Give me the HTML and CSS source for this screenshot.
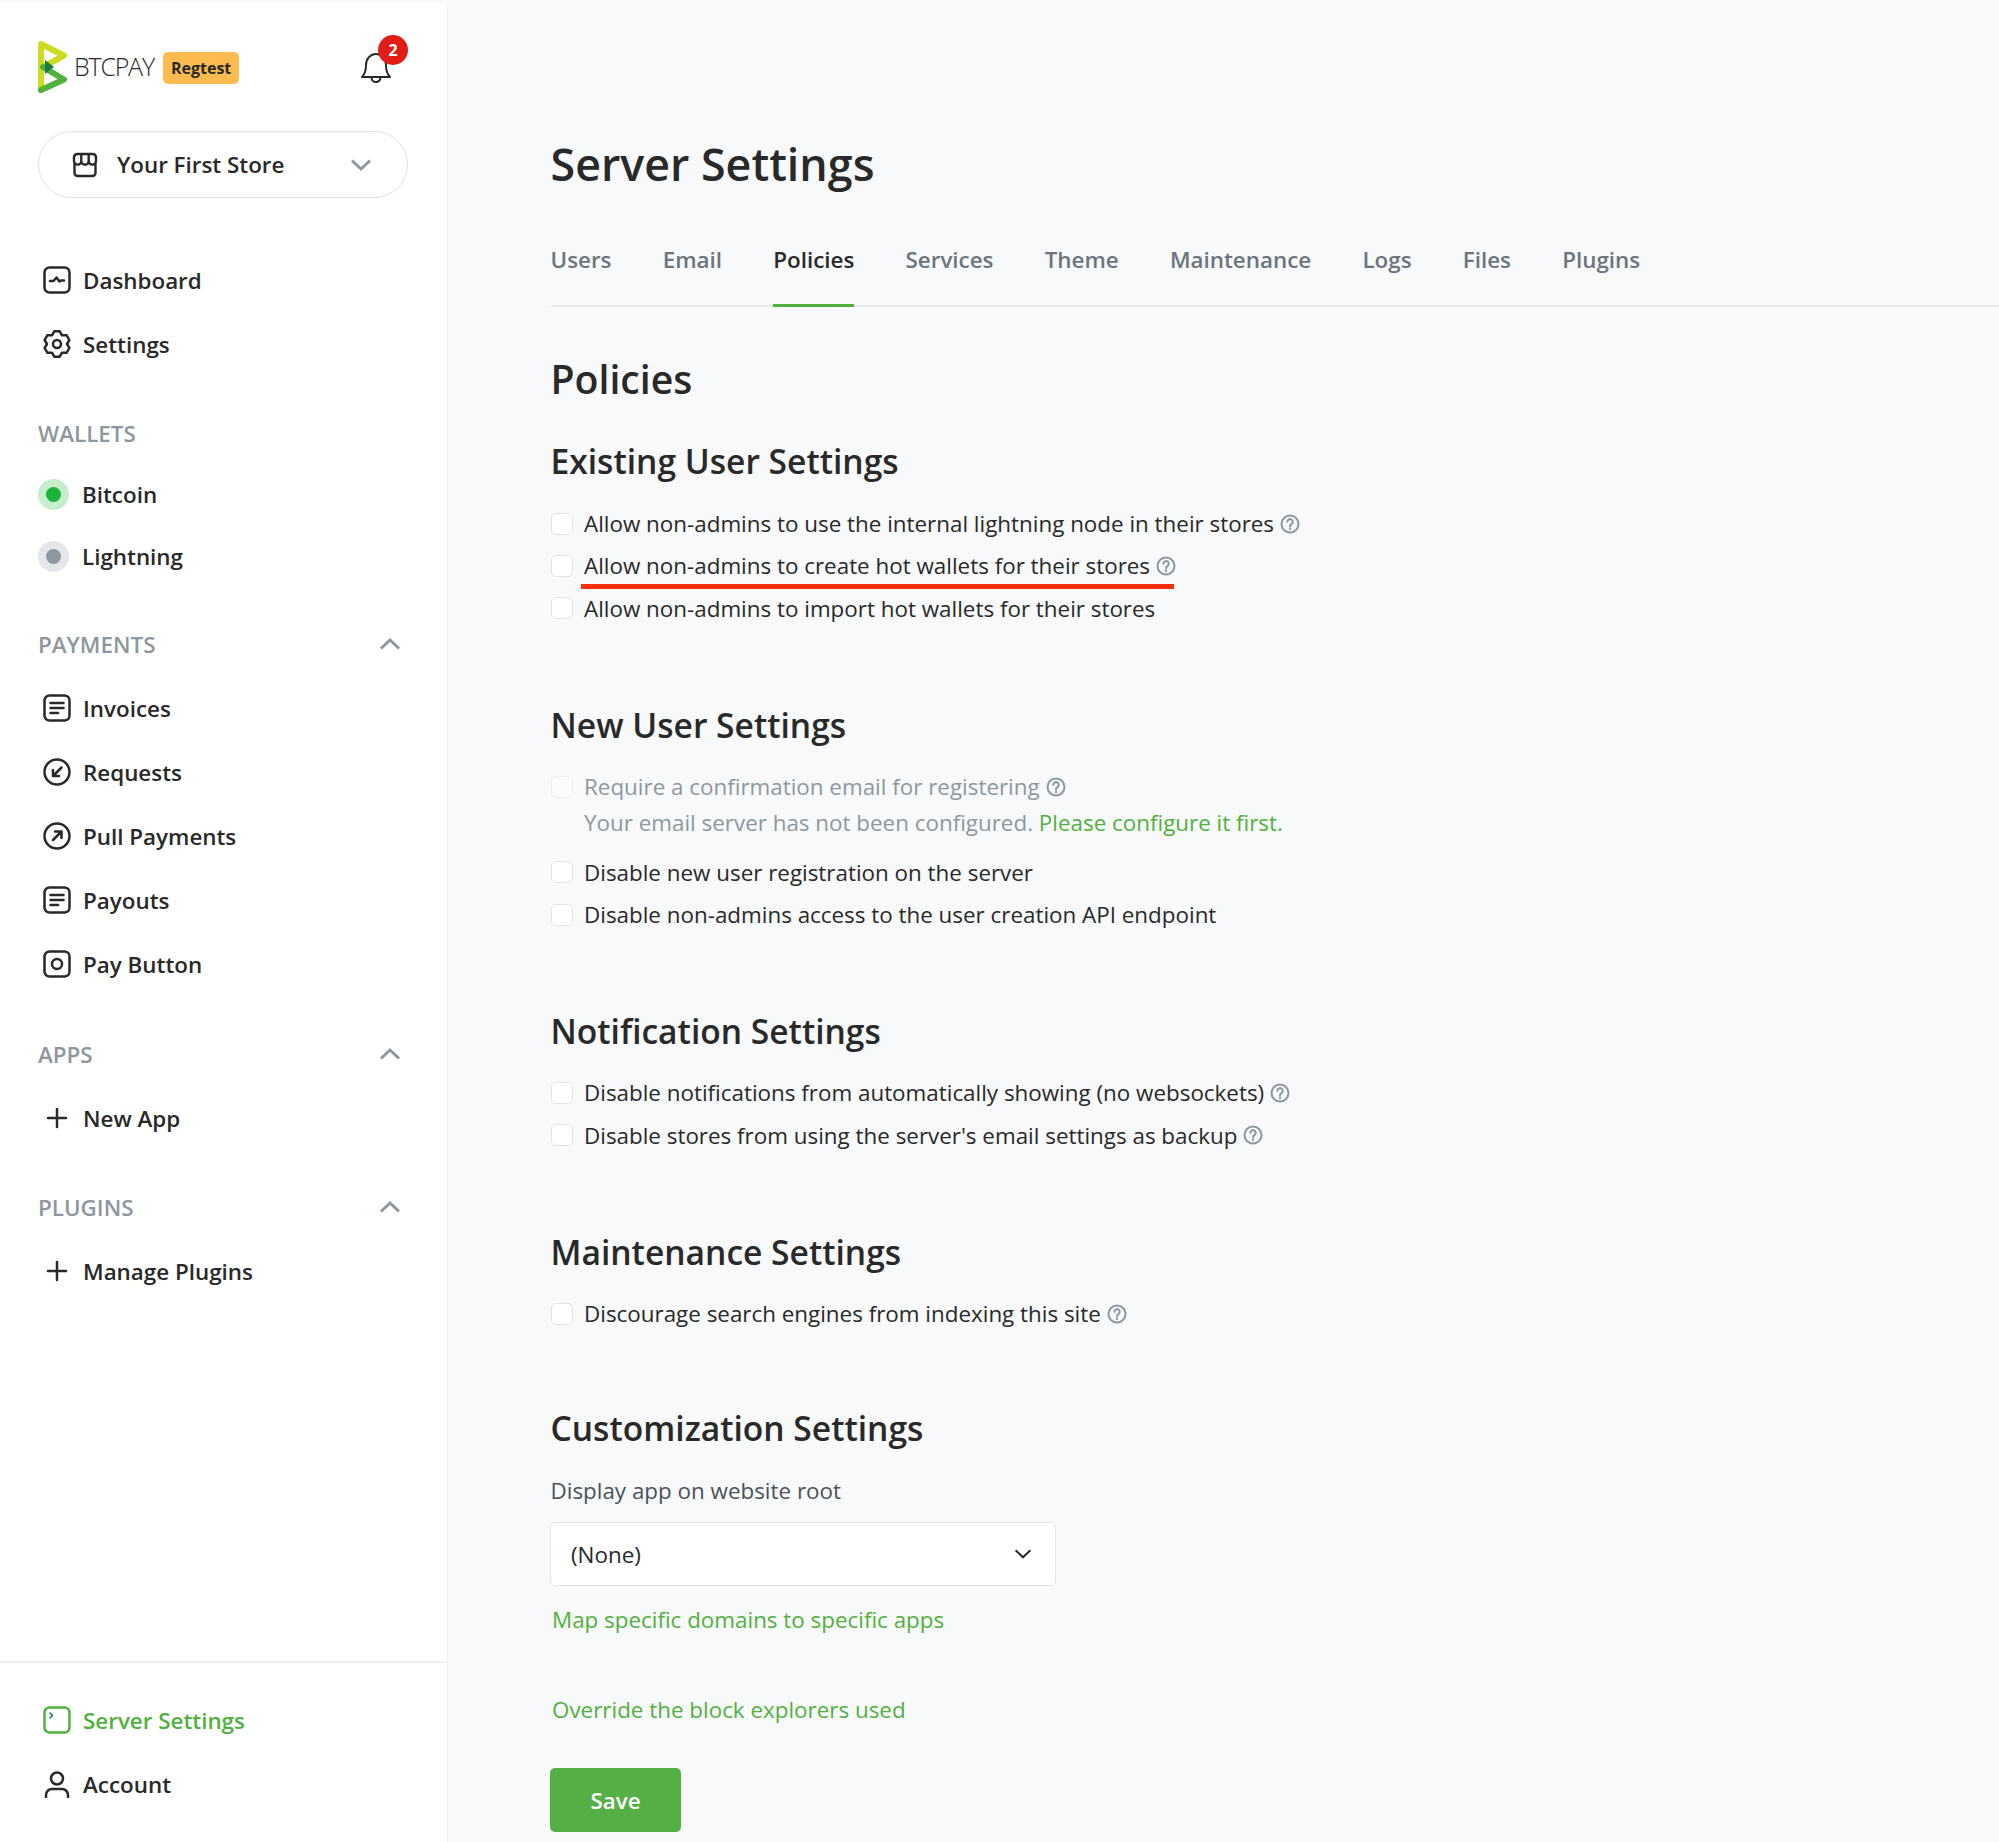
FILE: index.html

```html
<!DOCTYPE html>
<html lang="en">
<head>
    <meta charset="UTF-8">
    <meta name="viewport" content="width=device-width, initial-scale=1.0">
    <title>Server Settings</title>
    <link rel="stylesheet" href="styles.css">
</head>
<body>
    <svg class="sprite" width="0" height="0">
        <symbol id="i-lines" viewBox="0 0 28 28"><rect x="1.500" y="1.500" width="25" height="25" rx="5"/><path d="M7.500 9h13M7.500 14h13M7.500 19h7.500"/></symbol>
        <symbol id="i-help" viewBox="0 0 20 20"><circle cx="10" cy="10" r="8.500"/><path d="M7.300 7.800a2.700 2.700 0 1 1 4.200 2.300c-1 .6-1.500 1.100-1.500 2.200"/><path d="M10 14.300v1"/></symbol>
        <symbol id="i-plus" viewBox="0 0 28 28"><path d="M14 5v18M5 14h18"/></symbol>
        <symbol id="i-up" viewBox="0 0 22 14"><path d="M2 11.500l9-8.500 9 8.500"/></symbol>
    </svg>

    <div class="layout">
        <!-- Sidebar -->
        <aside class="sidebar">
            <div class="brand">
                <svg class="logo" viewBox="0 0 30 52">
                    <path class="logo-a" d="M3 3v46M3 3l23 11.500L5 26"/>
                    <path class="logo-b" d="M5 26l21 12.500L3 49"/>
                    <path class="logo-c" d="M7 19l9 7-9 7z"/>
                </svg>
                <span class="brand-name">BTCPAY</span>
                <span class="brand-badge">Regtest</span>
                <div class="bell">
                    <svg viewBox="0 0 32 34"><path d="M2 28c3-3 4-7 4-12 0-6.500 4.500-11 10-11s10 4.500 10 11c0 5 1 9 4 12z"/><path d="M11.500 28.500a4.500 4.500 0 0 0 9 0"/></svg>
                    <span class="bell-count">2</span>
                </div>
            </div>

            <button class="store-select">
                <svg class="store-icon" viewBox="0 0 26 26"><path d="M2 9V5a3.500 3.500 0 0 1 3.500-3h15A3.500 3.500 0 0 1 24 5v4a3.500 3.500 0 0 1-7.300 0 3.600 3.600 0 0 1-7.400 0A3.500 3.500 0 0 1 2 9zM9.300 2v7M16.700 2v7M2.500 10v11a3 3 0 0 0 3 3h15a3 3 0 0 0 3-3V10"/></svg>
                <span class="store-name">Your First Store</span>
                <svg class="store-caret" viewBox="0 0 22 14"><path d="M2 2.500l9 8.500 9-8.500"/></svg>
            </button>

            <nav class="nav nav-main">
                <a class="nav-item"><svg class="ico" viewBox="0 0 28 28"><rect x="1.500" y="1.500" width="25" height="25" rx="5"/><path d="M7 15h3.500l3-3.500 3 4 1.500-1h3"/></svg>Dashboard</a>
                <a class="nav-item"><svg class="ico" viewBox="0 0 28 28"><path d="M11.300 1.300h5.400L19 5.300h4.700L26.400 10 24 14l2.400 4-2.700 4.700H19l-2.300 4h-5.400L9 22.700H4.300L1.600 18 4 14l-2.400-4 2.700-4.700H9z"/><circle cx="14" cy="14" r="4"/></svg>Settings</a>
            </nav>

            <div class="nav-head first">WALLETS</div>
            <nav class="nav">
                <a class="wallet"><span class="dot dot-on"></span>Bitcoin</a>
                <a class="wallet"><span class="dot dot-off"></span>Lightning</a>
            </nav>

            <div class="nav-head">PAYMENTS<svg class="head-caret"><use href="#i-up"/></svg></div>
            <nav class="nav">
                <a class="nav-item"><svg class="ico"><use href="#i-lines"/></svg>Invoices</a>
                <a class="nav-item"><svg class="ico" viewBox="0 0 28 28"><circle cx="14" cy="14" r="12.500"/><path d="M18.500 9.500l-8.500 8.500M10 12v6h6"/></svg>Requests</a>
                <a class="nav-item"><svg class="ico" viewBox="0 0 28 28"><circle cx="14" cy="14" r="12.500"/><path d="M10 18l8.500-8.500M12 9.500h6.500V16"/></svg>Pull Payments</a>
                <a class="nav-item"><svg class="ico"><use href="#i-lines"/></svg>Payouts</a>
                <a class="nav-item"><svg class="ico" viewBox="0 0 28 28"><rect x="1.500" y="1.500" width="25" height="25" rx="5"/><circle cx="14" cy="14" r="5"/></svg>Pay Button</a>
            </nav>

            <div class="nav-head apps">APPS<svg class="head-caret"><use href="#i-up"/></svg></div>
            <nav class="nav">
                <a class="nav-item"><svg class="ico"><use href="#i-plus"/></svg>New App</a>
            </nav>

            <div class="nav-head">PLUGINS<svg class="head-caret"><use href="#i-up"/></svg></div>
            <nav class="nav">
                <a class="nav-item"><svg class="ico"><use href="#i-plus"/></svg>Manage Plugins</a>
            </nav>

            <nav class="nav nav-foot">
                <a class="nav-item active"><svg class="ico" viewBox="0 0 28 28"><rect x="1.500" y="1.500" width="25" height="25" rx="5"/><path class="prompt" d="M7 7l2.500 2.500L7 12"/></svg>Server Settings</a>
                <a class="nav-item"><svg class="ico" viewBox="0 0 28 28"><circle cx="14" cy="8.500" r="6"/><path d="M3 27v-2a6 6 0 0 1 6-6h10a6 6 0 0 1 6 6v2"/></svg>Account</a>
            </nav>
        </aside>

        <!-- Main content -->
        <main class="content">
            <h1>Server Settings</h1>
            <div class="tabs">
                <a class="tab">Users</a>
                <a class="tab">Email</a>
                <a class="tab active">Policies</a>
                <a class="tab">Services</a>
                <a class="tab">Theme</a>
                <a class="tab">Maintenance</a>
                <a class="tab">Logs</a>
                <a class="tab">Files</a>
                <a class="tab">Plugins</a>
            </div>

            <h2>Policies</h2>

            <h3 class="h-existing">Existing User Settings</h3>
            <label class="check"><input type="checkbox">Allow non-admins to use the internal lightning node in their stores<svg class="help"><use href="#i-help"/></svg></label>
            <label class="check marked"><input type="checkbox">Allow non-admins to create hot wallets for their stores<svg class="help"><use href="#i-help"/></svg></label>
            <label class="check"><input type="checkbox">Allow non-admins to import hot wallets for their stores</label>

            <h3>New User Settings</h3>
            <label class="check disabled"><input type="checkbox" disabled>Require a confirmation email for registering<svg class="help"><use href="#i-help"/></svg></label>
            <p class="check-note">Your email server has not been configured. <a class="link">Please configure it first.</a></p>
            <label class="check"><input type="checkbox">Disable new user registration on the server</label>
            <label class="check"><input type="checkbox">Disable non-admins access to the user creation API endpoint</label>

            <h3>Notification Settings</h3>
            <label class="check"><input type="checkbox">Disable notifications from automatically showing (no websockets)<svg class="help"><use href="#i-help"/></svg></label>
            <label class="check"><input type="checkbox">Disable stores from using the server's email settings as backup<svg class="help"><use href="#i-help"/></svg></label>

            <h3>Maintenance Settings</h3>
            <label class="check"><input type="checkbox">Discourage search engines from indexing this site<svg class="help"><use href="#i-help"/></svg></label>

            <h3 class="h-custom">Customization Settings</h3>
            <div class="field-label">Display app on website root</div>
            <div class="select">(None)<svg viewBox="0 0 22 14"><path d="M2 2.500l9 8.500 9-8.500"/></svg></div>
            <a class="link link-map">Map specific domains to specific apps</a>
            <a class="link link-block">Override the block explorers used</a>
            <button class="save">Save</button>
        </main>
    </div>
</body>
</html>
```

FILE: styles.css

```css
/* General styles */
* {
    box-sizing: border-box;
}

html, body {
    height: 100%;
}

body {
    margin: 0;
    font-family: "Open Sans", sans-serif;
    font-size: 22.400px;
    color: #292929;
    background-color: #f8f9fa;
    overflow: hidden;
}

.sprite {
    position: absolute;
}

.layout {
    display: flex;
    height: 100%;
}

/* Sidebar */
.sidebar {
    display: flex;
    flex-direction: column;
    flex: 0 0 448px;
    margin-top: 3px;
    padding: 0 0 0 38px;
    background: #fff;
    border-right: 1px solid #eff0f2;
}

.brand {
    display: flex;
    align-items: center;
    height: 52px;
    margin-top: 38px;
    padding-right: 40px;
}

.logo {
    width: 30px;
    height: 52px;
    flex: none;
    fill: none;
}

.logo path {
    stroke-width: 6;
    stroke-linecap: round;
    stroke-linejoin: round;
}

.logo-a {
    stroke: #cedc21;
}

.logo-b {
    stroke: #51b13e;
}

.logo .logo-c {
    fill: #1e7a44;
    stroke: none;
}

.brand-name {
    margin: -2px 0 0 6px;
    font-size: 25px;
    font-weight: 300;
    letter-spacing: -1.200px;
}

.brand-badge {
    margin: 2px 0 0 9px;
    padding: 0 8px;
    height: 32px;
    line-height: 32px;
    font-size: 16px;
    font-weight: 700;
    color: #292929;
    background: #ffbb4f;
    border-radius: 5px;
}

.bell {
    position: relative;
    width: 32px;
    height: 34px;
    margin: -3px 15px 0 auto;
}

.bell svg {
    width: 32px;
    height: 34px;
    fill: none;
    stroke: #292929;
    stroke-width: 2;
    stroke-linejoin: round;
    display: block;
}

.bell-count {
    position: absolute;
    top: -14px;
    left: 18px;
    width: 30px;
    height: 30px;
    line-height: 30px;
    text-align: center;
    color: #fff;
    font-size: 16px;
    font-weight: 700;
    background: #e21d16;
    border-radius: 50%;
}

.store-select {
    display: flex;
    align-items: center;
    width: 370px;
    height: 67px;
    margin-top: 38px;
    padding: 0 35px 0 33px;
    font: 600 22.400px "Open Sans", sans-serif;
    color: #292929;
    background: #fff;
    border: 1px solid #dfe2e5;
    border-radius: 34px;
}

.store-icon {
    width: 26px;
    height: 26px;
    fill: none;
    stroke: #292929;
    stroke-width: 2.400;
    stroke-linejoin: round;
    flex: none;
}

.store-name {
    margin-left: 19px;
}

.store-caret {
    width: 22px;
    height: 14px;
    margin-left: auto;
    fill: none;
    stroke: #8f979e;
    stroke-width: 3;
}

.nav {
    display: flex;
    flex-direction: column;
}

.nav-main {
    margin-top: 50px;
}

.nav-item {
    display: flex;
    align-items: center;
    height: 64px;
    padding-left: 5px;
    font-weight: 600;
    color: #292929;
}

.nav-item.active {
    color: #51b13e;
}

.ico {
    width: 28px;
    height: 28px;
    margin-right: 12px;
    fill: none;
    stroke: currentColor;
    stroke-width: 2.500;
    stroke-linecap: round;
    stroke-linejoin: round;
    flex: none;
}

.ico .prompt {
    stroke: #1e7a44;
    stroke-width: 1.500;
}

.nav-head {
    display: flex;
    align-items: center;
    justify-content: space-between;
    height: 64px;
    margin-top: 25px;
    padding-right: 46px;
    font-weight: 600;
    color: #8f979e;
}

.nav-head.first {
    height: 62px;
    margin-top: 26px;
}

.nav-head.apps {
    margin-top: 26px;
}

.head-caret {
    width: 22px;
    height: 14px;
    fill: none;
    stroke: #8f979e;
    stroke-width: 3;
}

.wallet {
    display: flex;
    align-items: center;
    height: 62px;
    margin-top: -0.500px;
    font-weight: 600;
}

.dot {
    width: 31px;
    height: 31px;
    margin-right: 13px;
    border-radius: 50%;
    display: flex;
    align-items: center;
    justify-content: center;
}

.dot::after {
    content: "";
    width: 15px;
    height: 15px;
    border-radius: 50%;
    background: currentColor;
}

.dot-on {
    color: #1bb53b;
    background: #c6eecd;
}

.dot-off {
    color: #8f979e;
    background: #e4e6e9;
}

.nav-foot {
    margin-top: auto;
    margin-left: -38px;
    margin-bottom: 26px;
    padding: 25px 0 0 38px;
    border-top: 2px solid #eff0f2;
}

/* Main content */
.content {
    flex: 1;
    display: flex;
    flex-direction: column;
    align-items: flex-start;
    padding: 0 0 0 102.500px;
}

h1, h2, h3 {
    margin: 0;
    font-weight: 600;
}

h1 {
    margin-top: 130px;
    font-size: 44.800px;
    line-height: 68px;
}

.tabs {
    display: flex;
    gap: 51.200px;
    align-self: stretch;
    margin-top: 44px;
    border-bottom: 2px solid #e6e8eb;
}

.tab {
    height: 63px;
    line-height: 36px;
    font-weight: 600;
    color: #6c757d;
}

.tab.active {
    height: 65px;
    margin-bottom: -2px;
    color: #292929;
    border-bottom: 3px solid #51b13e;
}

h2 {
    margin-top: 44px;
    font-size: 39.200px;
    line-height: 56px;
}

h3 {
    margin-top: 71px;
    margin-bottom: 17px;
    font-size: 33.600px;
    line-height: 48px;
}

.h-existing {
    margin-top: 30.400px;
}

.h-custom {
    margin-top: 69.500px;
}

.check {
    position: relative;
    display: flex;
    align-items: center;
    height: 42.400px;
}

.check input {
    appearance: none;
    width: 22px;
    height: 22px;
    margin: 0 11.500px 0 0;
    background: #fff;
    border: 1px solid #e2e5e8;
    border-radius: 5px;
}

.check.disabled {
    color: #8f979e;
}

.check.disabled input {
    opacity: 0.5;
}

/* red annotation under the second option */
.check.marked::after {
    content: "";
    position: absolute;
    left: 30.500px;
    top: 39px;
    width: 593px;
    height: 5.500px;
    background: #ff2e0a;
}

.help {
    width: 20px;
    height: 20px;
    margin-left: 6px;
    fill: none;
    stroke: #8f979e;
    stroke-width: 2;
    stroke-linecap: round;
}

.check-note {
    margin: -3px 0 10px 33.500px;
    line-height: 36px;
    color: #8f979e;
}

.link {
    color: #51b13e;
}

.field-label {
    margin: 5px 0 0 0;
    line-height: 34px;
    color: #4b5158;
}

.select {
    display: flex;
    align-items: center;
    justify-content: space-between;
    width: 506px;
    height: 64px;
    margin: 14px 0 0 -0.500px;
    padding: 0 23px 0 20px;
    background: #fff;
    border: 1px solid #e2e5e8;
    border-radius: 5px;
}

.select svg {
    width: 18px;
    height: 12px;
    fill: none;
    stroke: #292929;
    stroke-width: 2.500;
}

.link-map {
    margin: 17px 0 0 1.500px;
    line-height: 34px;
}

.link-block {
    margin: 56px 0 0 1.500px;
    line-height: 34px;
}

.save {
    width: 131px;
    height: 64px;
    margin: 41px 0 0 -0.500px;
    font: 600 22.400px "Open Sans", sans-serif;
    color: #fff;
    background: #54b045;
    border: none;
    border-radius: 5px;
}
```
